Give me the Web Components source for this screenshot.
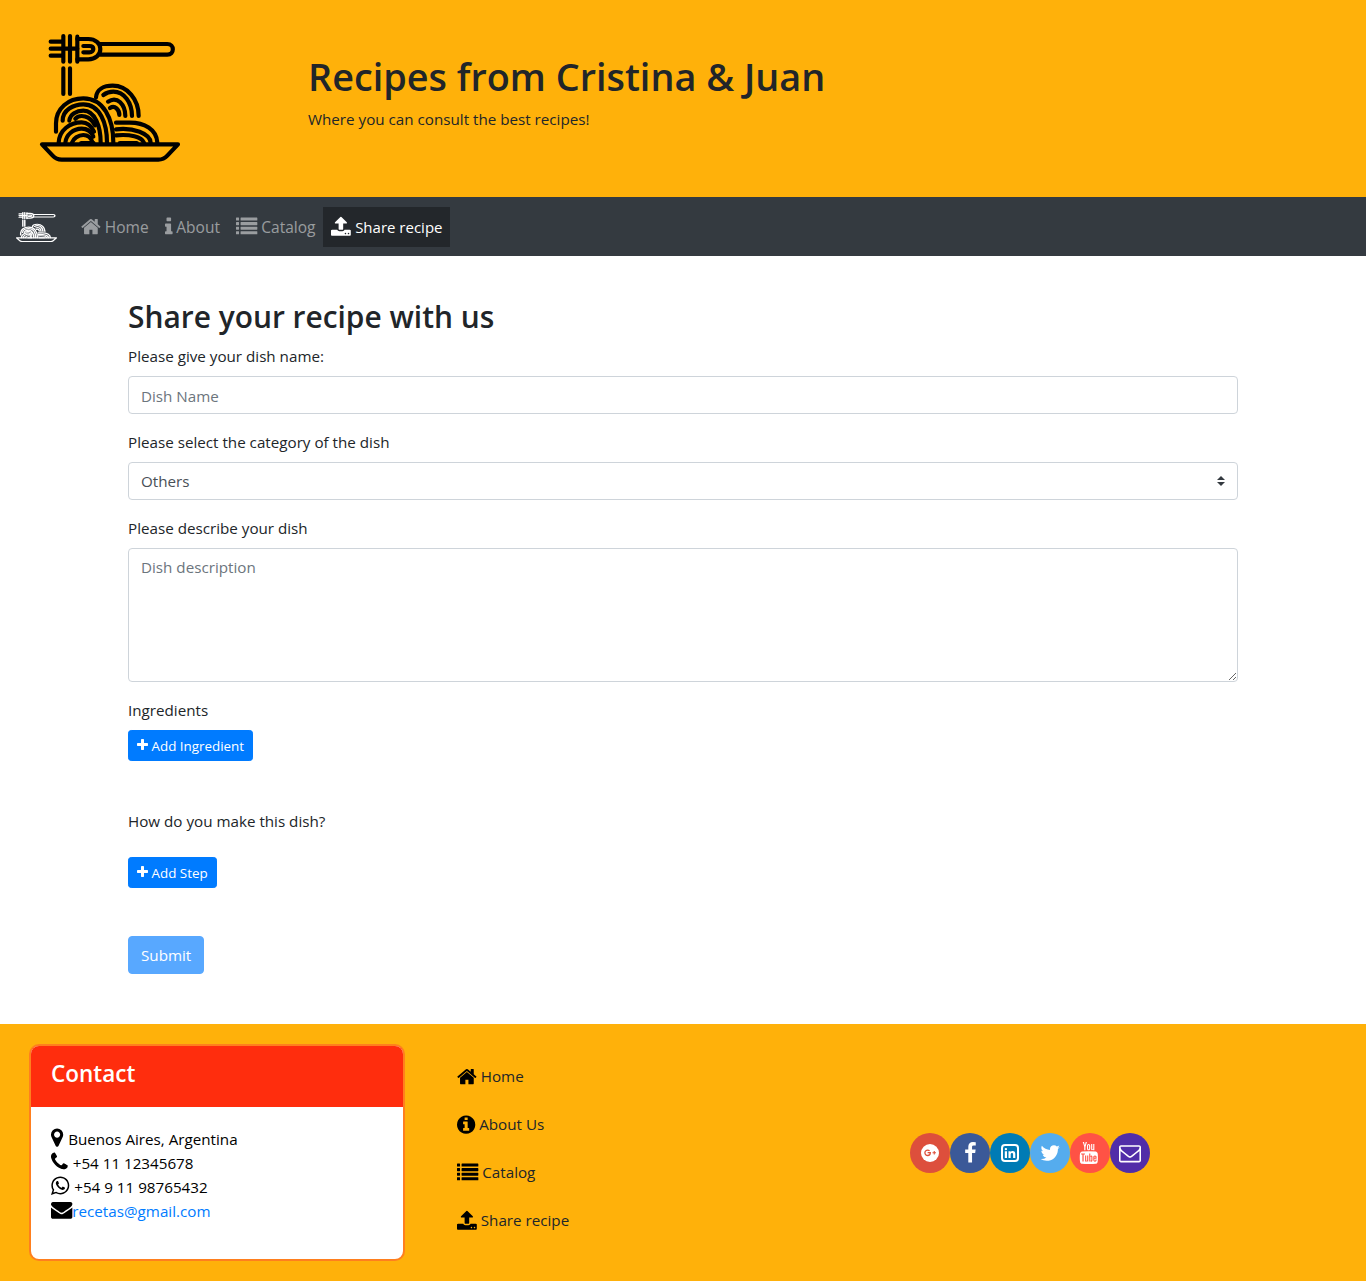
<!DOCTYPE html>
<html lang="en">
<head>
<meta charset="utf-8">
<title>Recipes from Cristina &amp; Juan</title>
<style>
html,body{margin:0;padding:0;}
body{
	font-family:"Open Sans","Noto Sans","Liberation Sans",sans-serif;
	font-size:15.2px;
	line-height:24px;
	color:#212529;
	background:#fff;
}
</style>
</head>
<body>
<recipe-banner>
	<span slot="title">Recipes from Cristina &amp; Juan</span>
	<span slot="tagline">Where you can consult the best recipes!</span>
</recipe-banner>
<recipe-nav></recipe-nav>
<share-form></share-form>
<site-footer></site-footer>

<script>
'use strict';

// four rows of the list icon, each with its bullet
const listRows = [128,512,896,1280].map(y=>{
	return `M32 ${y}h192q32 0 32 32v192q0 32-32 32h-192q-32 0-32-32v-192q0-32 32-32zM416 ${y}h1344q32 0 32 32v192q0 32-32 32h-1344q-32 0-32-32v-192q0-32 32-32z`;
}).join('');

// FontAwesome 4 shapes, on a 1792 square. adv is the glyph's advance width
const icons = {
	home:{adv:1664,d:'M1472 992v480q0 26-19 45t-45 19h-384v-384h-256v384h-384q-26 0-45-19t-19-45v-480q0-1 .5-3t.5-3l575-474 575 474q1 2 1 6zm223-69l-62 74q-8 9-21 11h-3q-13 0-21-7l-692-577-692 577q-12 8-24 7-13-2-21-11l-62-74q-8-10-7-23.500t11-21.500l719-599q32-26 76-26t76 26l244 204v-195q0-14 9-23t23-9h192q14 0 23 9t9 23v408l219 182q10 8 11 21.500t-7 23.500z'},
	info:{adv:640,d:'M1216 1344v128q0 26-19 45t-45 19h-512q-26 0-45-19t-19-45v-128q0-26 19-45t45-19h64v-384h-64q-26 0-45-19t-19-45v-128q0-26 19-45t45-19h384q26 0 45 19t19 45v576h64q26 0 45 19t19 45zm-128-1152v192q0 26-19 45t-45 19h-256q-26 0-45-19t-19-45v-192q0-26 19-45t45-19h256q26 0 45 19t19 45z'},
	infocircle:{adv:1536,d:'M1152 1376v-160q0-14-9-23t-23-9h-96v-512q0-14-9-23t-23-9h-320q-14 0-23 9t-9 23v160q0 14 9 23t23 9h96v320h-96q-14 0-23 9t-9 23v160q0 14 9 23t23 9h448q14 0 23-9t9-23zm-128-896v-160q0-14-9-23t-23-9h-192q-14 0-23 9t-9 23v160q0 14 9 23t23 9h192q14 0 23-9t9-23zm640 416q0 209-103 385.500t-279.500 279.500-385.500 103-385.500-103-279.500-279.500-103-385.500 103-385.500 279.500-279.500 385.500-103 385.500 103 279.500 279.500 103 385.500z'},
	list:{adv:1792,d:listRows},
	upload:{adv:1664,d:'M1344 1472q0-26-19-45t-45-19-45 19-19 45 19 45 45 19 45-19 19-45zm256 0q0-26-19-45t-45-19-45 19-19 45 19 45 45 19 45-19 19-45zm128-224v320q0 40-28 68t-68 28h-1472q-40 0-68-28t-28-68v-320q0-40 28-68t68-28h427q21 56 70.500 92t110.500 36h256q61 0 110.500-36t70.500-92h427q40 0 68 28t28 68zm-325-648q-17 40-59 40h-256v448q0 26-19 45t-45 19h-256q-26 0-45-19t-19-45v-448h-256q-42 0-59-40-17-39 14-69l448-448q18-19 45-19t45 19l448 448q31 30 14 69z'},
	marker:{adv:1024,d:'M1152 640q0-106-75-181t-181-75-181 75-75 181 75 181 181 75 181-75 75-181zm256 0q0 109-33 179l-364 774q-16 33-47.500 52t-67.500 19-67.500-19-46.500-52l-365-774q-33-70-33-179 0-212 150-362t362-150 362 150 150 362z'},
	phone:{adv:1408,d:'M1600 1240q0 27-10 70.500t-21 68.500q-21 50-122 106-94 51-186 51-27 0-53-3.500t-57.500-12.500-47-14.500-55.500-20.500-49-18q-98-35-175-83-127-79-264-216t-216-264q-48-77-83-175-3-9-18-49t-20.500-55.500-14.500-47-12.500-57.500-3.500-53q0-92 51-186 56-101 106-122 25-11 68.500-21t70.500-10q14 0 21 3 18 6 53 76 11 19 30 54t35 63.500 31 53.500q3 4 17.500 25t21.500 35.500 7 28.500q0 20-28.500 50t-62 55-62 53-28.500 46q0 9 5 22.500t8.500 20.500 14 24 11.500 19q76 137 174 235t235 174q2 1 19 11.500t24 14 20.500 8.500 22.500 5q18 0 46-28.500t53-62 55-62 50-28.500q14 0 28.500 7t35.500 21.500 25 17.500q25 15 53.500 31t63.500 35 54 30q70 35 76 53 3 7 3 21z'},
	whatsapp:{adv:1536,d:'M1113 974q13 0 97.500 44t89.500 53q2 5 2 15 0 33-17 76-16 39-71 65.500t-102 26.500q-57 0-190-62-98-45-170-118t-148-185q-72-107-71-194v-8q3-91 74-158 24-22 52-22 6 0 18 1.500t19 1.500q19 0 26.500 6.500t15.500 27.500q8 20 33 88t25 75q0 21-34.500 57.500t-34.500 46.500q0 7 5 15 34 73 102 137 56 53 151 101 12 7 22 7 15 0 54-48.500t52-48.500zm-203 530q127 0 243.500-50t200.500-134 134-200.500 50-243.500-50-243.500-134-200.500-200.500-134-243.500-50-243.500 50-200.500 134-134 200.500-50 243.500q0 203 120 368l-79 233 242-77q158 104 345 104zm0-1382q153 0 292.500 60t240.500 161 161 240.500 60 292.500-60 292.500-161 240.500-240.500 161-292.500 60q-195 0-365-94l-417 134 136-405q-108-178-108-389 0-153 60-292.500t161-240.500 240.500-161 292.500-60z'},
	envelope:{adv:1792,d:'M1792 710v794q0 66-47 113t-113 47h-1472q-66 0-113-47t-47-113v-794q44 49 101 87 362 246 497 345 57 42 92.500 65.500t94.500 48 110 24.500h2q51 0 110-24.500t94.500-48 92.500-65.500q170-123 498-345 57-39 100-87zm0-294q0 79-49 151t-122 123q-376 261-468 325-10 7-42.500 30.500t-54 38-52 32.500-57.500 27-50 9h-2q-23 0-50-9t-57.500-27-52-32.500-54-38-42.500-30.500q-91-64-262-182.500t-205-142.500q-62-42-117-115.500t-55-136.500q0-78 41.500-130t118.500-52h1472q65 0 112.500 47t47.500 113z'},
	envelopeo:{adv:1792,d:'M1664 1504v-768q-32 36-69 66-268 206-426 338-51 43-83 67t-86.500 48.500-102.500 24.500h-2q-48 0-102.500-24.500t-86.500-48.500-83-67q-158-132-426-338-37-30-69-66v768q0 13 9.500 22.500t22.500 9.500h1472q13 0 22.500-9.500t9.500-22.500zm0-1051v-24.500l-.5-13-3-12.500-5.500-9-9-7.500-14-2.500h-1472q-13 0-22.500 9.500t-9.500 22.500q0 168 147 284 193 152 401 317 6 5 35 29.500t46 37.500 44.500 31.500 50.500 27.500 43 9h2q20 0 43-9t50.500-27.500 44.500-31.500 46-37.500 35-29.500q208-165 401-317 54-43 100.500-115.500t46.500-131.500zm128-37v1088q0 66-47 113t-113 47h-1472q-66 0-113-47t-47-113v-1088q0-66 47-113t113-47h1472q66 0 113 47t47 113z'},
	facebook:{adv:1024,d:'M1343 12v264h-157q-86 0-116 36t-30 108v189h293l-39 296h-254v759h-306v-759h-255v-296h255v-218q0-186 104-288.500t277-102.500q147 0 228 12z'},
	twitter:{adv:1664,d:'M1684 408q-67 98-162 167 1 14 1 42 0 130-38 259.500t-115.500 248.500-184.500 210.500-258 146-323 54.500q-271 0-496-145 35 4 78 4 225 0 401-138-105-2-188-64.500t-114-159.500q33 5 61 5 43 0 85-11-112-23-185.500-111.500t-73.500-205.500v-4q68 38 146 41-66-44-105-115t-39-154q0-88 44-163 121 149 294.500 238.500t371.500 99.500q-8-38-8-74 0-134 94.500-228.500t228.500-94.500q140 0 236 102 109-21 205-78-37 115-142 178 101-11 202-53z'},
	youtube:{adv:1536,d:'M971 1244v211q0 67-39 67-23 0-45-22v-301q22-22 45-22 39 0 39 67zm338 1v46h-90v-46q0-68 45-68t45 68zm-966-218h107v-94h-312v94h105v569h100v-569zm288 569h89v-494h-89v378q-30 42-57 42-18 0-21-21-1-3-1-35v-364h-89v391q0 49 8 73 12 37 58 37 48 0 102-61v54zm429-148v-197q0-73-9-99-17-56-71-56-50 0-93 54v-217h-89v663h89v-48q45 55 93 55 54 0 71-55 9-27 9-100zm338-10v-13h-91q0 51-2 61-7 36-40 36-46 0-46-69v-87h179v-103q0-79-27-116-39-51-106-51-68 0-107 51-28 37-28 116v173q0 79 29 116 39 51 108 51 72 0 108-53 18-27 21-54 2-9 2-58zm-608-913v-210q0-69-43-69t-43 69v210q0 70 43 70t43-70zm719 751q0 234-26 350-14 59-58 99t-102 46q-184 21-555 21t-555-21q-58-6-102.500-46t-57.500-99q-26-112-26-350 0-234 26-350 14-59 58-99t103-47q183-20 554-20t555 20q58 7 102.500 47t57.500 99q26 112 26 350zm-998-1276h102l-121 399v271h-100v-271q-14-74-61-212-37-103-65-187h106l71 263zm370 333v175q0 81-28 118-38 51-106 51-67 0-105-51-28-38-28-118v-175q0-80 28-117 38-51 105-51 68 0 106 51 28 37 28 117zm335-162v499h-91v-55q-53 62-103 62-46 0-59-37-8-24-8-75v-394h91v367q0 33 1 35 3 22 21 22 27 0 57-43v-381h91z'},
	plus:{adv:1408,d:'M1600 736v192q0 40-28 68t-68 28h-416v416q0 40-28 68t-68 28h-192q-40 0-68-28t-28-68v-416h-416q-40 0-68-28t-28-68v-192q0-40 28-68t68-28h416v-416q0-40 28-68t68-28h192q40 0 68 28t28 68v416h416q40 0 68 28t28 68z'},
};

class faIcon extends HTMLElement {
	constructor(){
		super();
		this.attachShadow({mode:'open'});
	}
	connectedCallback(){
		let icon = icons[this.getAttribute('name')];
		let x = (1792-icon.adv)/2;
		this.shadowRoot.innerHTML = `<style>
:host{display:inline-block;line-height:0;white-space:normal;vertical-align:-0.143em;}
svg{display:block;height:1em;width:${icon.adv/1792}em;fill:currentColor;overflow:visible;}
</style><svg viewBox="${x} 0 ${icon.adv} 1792"><path d="${icon.d}"/></svg>`;
	}
}
customElements.define('fa-icon',faIcon);

// the pasta logo, drawn on a 540x450 box. "tight" crops it to the drawing and lets it stretch
class pastaLogo extends HTMLElement {
	constructor(){
		super();
		this.attachShadow({mode:'open'});
	}
	connectedCallback(){
		let tight = this.hasAttribute('tight');
		let box = tight ? 'viewBox="60 40 420 385" preserveAspectRatio="none"' : 'viewBox="0 0 540 450"';
		this.shadowRoot.innerHTML = `<style>
:host{display:block;line-height:0;}
svg{display:block;width:100%;height:100%;fill:none;stroke:currentColor;stroke-width:${tight ? 15 : 12.5};stroke-linecap:round;stroke-linejoin:round;}
</style>
<svg ${box}>
	<path d="M92 65H126M92 86H172M92 107H126"/>
	<path d="M130 48V125M150 48V125M172 50V125"/>
	<path d="M172 57H205C226 57 241 70 241 87C241 105 226 118 205 118H172"/>
	<path d="M190 78H208C216 78 220 82 220 87C220 92 216 97 208 97H190"/>
	<path d="M241 72H442C464 72 464 104 442 104H241"/>
	<path d="M130 145V222M150 145V222"/>
	<path d="M228 232C230 208 252 197 278 197C322 197 356 238 356 288"/>
	<path d="M250 225C262 216 270 215 280 215C312 215 336 248 336 288"/>
	<path d="M264 245C292 226 316 255 316 288"/>
	<path d="M270 264C285 254 298 270 298 285"/>
	<path d="M108 335V310C108 265 145 235 190 235C250 235 280 295 280 368"/>
	<path d="M128 302C128 270 160 253 190 253C240 253 261 310 261 368"/>
	<path d="M148 302C150 282 170 272 190 272C225 272 242 320 242 368"/>
	<path d="M166 296C180 282 210 286 225 316"/>
	<path d="M116 368C118 330 150 307 185 307C200 307 212 313 222 335"/>
	<path d="M136 368C138 345 160 326 185 326C205 326 215 338 220 350"/>
	<path d="M156 368C160 355 175 345 190 345C205 345 214 355 218 368"/>
	<path d="M288 308H320C375 305 410 330 412 368"/>
	<path d="M288 328C340 322 390 340 392 368"/>
	<path d="M288 346C330 342 365 350 372 368"/>
	<path d="M184 370H220M300 370H350" stroke-width="14"/>
	<path d="M66 373H474L442 407Q431 419 415 419H125Q109 419 98 407Z"/>
</svg>`;
	}
}
customElements.define('pasta-logo',pastaLogo);

class recipeBanner extends HTMLElement {
	constructor(){
		super();
		this.attachShadow({mode:'open'});
		this.shadowRoot.innerHTML = `
<style>
:host{display:flex;height:197px;box-sizing:border-box;padding:20px 0 0 20px;background:#ffb10a;color:#212529;}
pasta-logo{width:180px;height:150px;color:#000;flex:none;}
div{margin:33px 0 0 108px;}
h1{margin:0 0 6px;font-size:37.8px;line-height:48px;font-weight:600;}
p{margin:0;}
</style>
<pasta-logo></pasta-logo>
<div><h1><slot name="title"></slot></h1><p><slot name="tagline"></slot></p></div>`;
	}
}
customElements.define('recipe-banner',recipeBanner);

class recipeNav extends HTMLElement {
	constructor(){
		super();
		this.attachShadow({mode:'open'});
		let links = [
			['home','Home'],
			['info','About'],
			['list','Catalog'],
			['upload','Share recipe'],
		];
		let items = links.map((l,i)=>{
			let active = i === links.length-1 ? ' class="active"' : '';
			return `<a href="#"${active}><fa-icon name="${l[0]}"></fa-icon> ${l[1]}</a>`;
		}).join('');
		this.shadowRoot.innerHTML = `
<style>
:host{display:flex;align-items:center;height:59px;box-sizing:border-box;padding:1px 16px 0;background:#343a40;}
pasta-logo{width:41px;height:30px;color:#fff;margin-right:16px;flex:none;}
a{display:block;height:24px;padding:8px;line-height:24px;font-size:15.5px;color:rgba(255,255,255,.5);text-decoration:none;white-space:pre;}
a.active{color:#fff;background:#23272b;font-size:15px;}
fa-icon{font-size:21.33px;vertical-align:-0.22em;}
nav{display:flex;align-items:center;}
</style>
<pasta-logo tight></pasta-logo>
<nav>${items}</nav>`;
	}
}
customElements.define('recipe-nav',recipeNav);

class formField extends HTMLElement {
	constructor(){
		super();
		this.attachShadow({mode:'open'});
		this.shadowRoot.innerHTML = `
<style>
:host{display:block;margin-bottom:var(--field-gap,16px);}
label{display:block;margin-bottom:8px;line-height:24px;}
</style>
<label><slot name="label"></slot></label>
<slot></slot>`;
	}
}
customElements.define('form-field',formField);

class shareForm extends HTMLElement {
	constructor(){
		super();
		this.attachShadow({mode:'open'});
		let arrows = "data:image/svg+xml,%3csvg xmlns='http://www.w3.org/2000/svg' viewBox='0 0 4 5'%3e%3cpath fill='%23343a40' d='M2 0L0 2h4zm0 5L0 3h4z'/%3e%3c/svg%3e";
		this.shadowRoot.innerHTML = `
<style>
:host{display:block;box-sizing:border-box;width:1110px;margin:0 auto;padding:42px 0 50px;}
h2{margin:0 0 8px;font-size:29.9px;line-height:38px;font-weight:600;}
input,select,textarea{
	display:block;width:100%;box-sizing:border-box;margin:0;
	padding:6px 12px;height:38px;
	font:inherit;line-height:24px;color:#495057;background:#fff;
	border:1px solid #ced4da;border-radius:4px;outline:none;
}
input{padding-top:7px;padding-bottom:5px;}
::placeholder{color:#6c757d;opacity:1;}
select{appearance:none;-webkit-appearance:none;background:#fff url("${arrows}") no-repeat right 12px center/8px 10px;padding-right:28px;}
textarea{height:134px;resize:vertical;}
button{
	display:block;border:1px solid #007bff;background:#007bff;color:#fff;
	font:inherit;cursor:pointer;
}
.small{height:31px;padding:1px 8px 0;font-size:13.4px;line-height:21px;border-radius:3.2px;}
.small fa-icon{font-size:14px;vertical-align:-0.12em;}
.submit{height:38px;padding:0 12px;border-radius:4px;opacity:.65;}
.ingredients{--field-gap:48px;}
.steps{margin-bottom:48px;}
.steps label{display:block;line-height:24px;margin-bottom:24px;}
</style>
<h2>Share your recipe with us</h2>
<form>
	<form-field>
		<span slot="label">Please give your dish name:</span>
		<input type="text" placeholder="Dish Name">
	</form-field>
	<form-field>
		<span slot="label">Please select the category of the dish</span>
		<select><option>Others</option></select>
	</form-field>
	<form-field>
		<span slot="label">Please describe your dish</span>
		<textarea placeholder="Dish description"></textarea>
	</form-field>
	<form-field class="ingredients">
		<span slot="label">Ingredients</span>
		<button type="button" class="small"><fa-icon name="plus"></fa-icon> Add Ingredient</button>
	</form-field>
	<div class="steps">
		<label>How do you make this dish?</label>
		<button type="button" class="small"><fa-icon name="plus"></fa-icon> Add Step</button>
	</div>
	<button type="button" class="submit" disabled>Submit</button>
</form>`;
	}
}
customElements.define('share-form',shareForm);

class contactCard extends HTMLElement {
	constructor(){
		super();
		this.attachShadow({mode:'open'});
		this.shadowRoot.innerHTML = `
<style>
:host{display:block;box-sizing:border-box;border:2px solid #ff7f1e;border-radius:10px;background:#fff;overflow:hidden;color:#000;}
h4{margin:0;padding:10px 20px 0;height:61px;box-sizing:border-box;background:#ff2d0d;color:#fff;font-size:22.5px;line-height:36px;font-weight:600;}
div{padding:20px 20px 36px;}
p{margin:0;line-height:24px;height:24px;white-space:pre;}
a{color:#007bff;text-decoration:none;}
fa-icon{font-size:21.33px;}
.gap{margin-right:1px;}
</style>
<h4>Contact</h4>
<div>
	<p><fa-icon class="gap" name="marker"></fa-icon> Buenos Aires, Argentina</p>
	<p><fa-icon class="gap" name="phone"></fa-icon> +54 11 12345678</p>
	<p><fa-icon class="gap" name="whatsapp"></fa-icon> +54 9 11 98765432</p>
	<p><fa-icon name="envelope"></fa-icon><a href="#">recetas@gmail.com</a></p>
</div>`;
	}
}
customElements.define('contact-card',contactCard);

class socialRound extends HTMLElement {
	constructor(){
		super();
		this.attachShadow({mode:'open'});
		this.shadowRoot.innerHTML = `
<style>
:host{display:flex;align-items:center;justify-content:center;width:40px;height:40px;border-radius:50%;color:#fff;font-size:22px;background:var(--bg);}
</style>
<slot></slot>`;
	}
}
customElements.define('social-round',socialRound);

class siteFooter extends HTMLElement {
	constructor(){
		super();
		this.attachShadow({mode:'open'});
		this.shadowRoot.innerHTML = `
<style>
:host{display:grid;grid-template-columns:376px 392px 466px;height:257px;box-sizing:border-box;padding:20px 0 20px 29px;background:#ffb10a;}
contact-card{height:217px;}
ul{list-style:none;margin:0 0 0 52px;padding:20px 0 0;}
li{height:24px;line-height:24px;margin-bottom:24px;white-space:pre;}
li fa-icon{font-size:21.33px;vertical-align:-0.25em;color:#000;}
a{color:#212529;text-decoration:none;}
.social{display:flex;justify-content:center;align-items:center;}
.in{display:block;width:18px;height:18px;}
.gplus{display:block;width:20px;height:20px;}
</style>
<contact-card></contact-card>
<ul>
	<li><a href="#"><fa-icon name="home"></fa-icon> Home</a></li>
	<li><a href="#"><fa-icon name="infocircle"></fa-icon> About Us</a></li>
	<li><a href="#"><fa-icon name="list"></fa-icon> Catalog</a></li>
	<li><a href="#"><fa-icon name="upload"></fa-icon> Share recipe</a></li>
</ul>
<div class="social">
	<social-round style="--bg:#dd4f3c">
		<svg class="gplus" viewBox="0 0 20 20">
			<circle cx="10" cy="10" r="9" fill="#fff"/>
			<path d="M7.600 9.700H10.300C10.300 11.500 9.100 12.500 7.700 12.500C6.100 12.500 4.900 11.300 4.900 9.800C4.900 8.300 6.100 7.100 7.700 7.100C8.500 7.100 9.100 7.400 9.600 7.800" fill="none" stroke="#dd4f3c" stroke-width="1.300"/>
			<path d="M12.500 9.800H16M14.250 8V11.600" fill="none" stroke="#dd4f3c" stroke-width="1.100"/>
		</svg>
	</social-round>
	<social-round style="--bg:#3b5998"><fa-icon name="facebook"></fa-icon></social-round>
	<social-round style="--bg:#007bb5">
		<svg class="in" viewBox="0 0 18 18">
			<rect x="1" y="1" width="16" height="16" rx="3" fill="none" stroke="#fff" stroke-width="2"/>
			<path fill="#fff" d="M3.800 7.200H6V14H3.800zM4.900 3.900A1.200 1.200 0 1 1 4.900 6.300A1.200 1.200 0 1 1 4.900 3.900zM7.500 7.200H9.600V8.100C10 7.500 10.700 7 11.700 7C13.500 7 14.300 8.100 14.300 10V14H12.100V10.400C12.100 9.400 11.700 8.900 11 8.900C10.200 8.900 9.700 9.500 9.700 10.400V14H7.500z"/>
		</svg>
	</social-round>
	<social-round style="--bg:#55acee"><fa-icon name="twitter"></fa-icon></social-round>
	<social-round style="--bg:#ff5245"><fa-icon name="youtube"></fa-icon></social-round>
	<social-round style="--bg:#512da8"><fa-icon name="envelopeo"></fa-icon></social-round>
</div>`;
	}
}
customElements.define('site-footer',siteFooter);
</script>
</body>
</html>
